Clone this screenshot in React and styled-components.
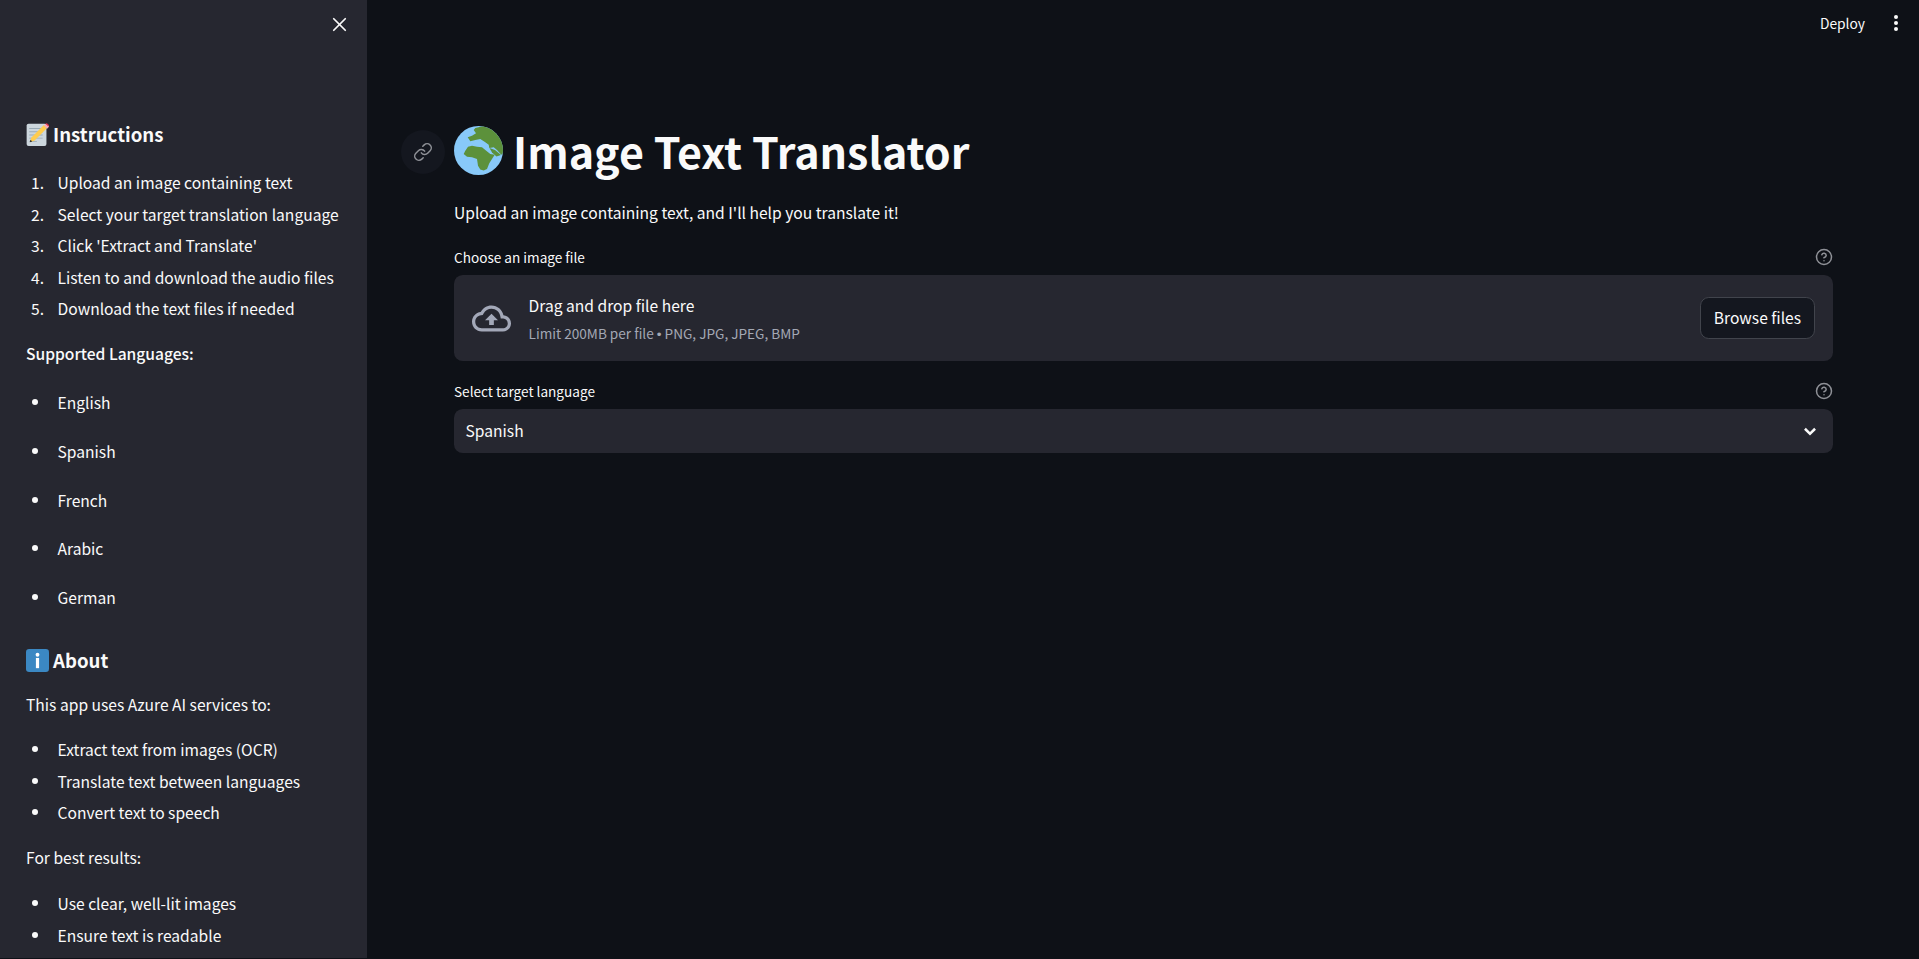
import React from "react";
import styled, { createGlobalStyle } from "styled-components";
import { X, Link, CircleHelp } from "lucide-react";

const Global = createGlobalStyle`
  html, body { margin: 0; padding: 0; height: 100%; background: #0e1117; overflow: hidden; }
  body { font-family: "Noto Sans CJK SC", "Noto Sans", sans-serif; color: #fafafa; -webkit-font-smoothing: antialiased; }
  #root { height: 100%; }
`;

const Shell = styled.div`
  display: flex;
  height: 959px;
  overflow: hidden;
`;

const Sidebar = styled.aside`
  flex: 0 0 367px;
  height: 958px;
  background: #262730;
  padding: 0 0 0 26px;
  box-sizing: border-box;
  overflow: hidden;
`;

const CloseRow = styled.div`
  display: flex;
  justify-content: flex-end;
  align-items: flex-start;
  height: 114px;
  padding: 13px 16px 0 0;
  box-sizing: border-box;
  color: #fafafa;
`;

const SideHeading = styled.h3`
  display: flex;
  align-items: center;
  gap: 4px;
  margin: ${(p) => p.$top || 0}px 0 0;
  height: 40px;
  font-size: 18.6px;
  font-weight: 600;
  line-height: 40px;
`;

const SideText = styled.p`
  margin: ${(p) => p.$top || 0}px 0 0;
  font-size: 15.62px;
  line-height: 28px;
  font-weight: ${(p) => (p.$bold ? 500 : 400)};
  white-space: nowrap;
`;

const List = styled.ul`
  list-style: none;
  margin: ${(p) => p.$top || 0}px 0 0;
  padding: 0;
`;

const Item = styled.li`
  display: flex;
  align-items: center;
  height: 28px;
  margin-bottom: ${(p) => p.$gap ?? 3.5}px;
  font-size: 15.62px;
  line-height: 28px;
  white-space: nowrap;
  &:last-child { margin-bottom: 0; }
`;

const Num = styled.span`
  flex: 0 0 31.5px;
  padding-left: 5px;
  box-sizing: border-box;
`;

const BulletBox = styled.span`
  flex: 0 0 31.5px;
  display: flex;
  padding-left: 6px;
  box-sizing: border-box;
`;

const Dot = styled.i`
  width: 6px;
  height: 6px;
  border-radius: 50%;
  background: #fafafa;
`;

const Main = styled.main`
  flex: 1;
  min-width: 0;
  padding: 0 86px 0 87px;
  box-sizing: border-box;
  background: #0e1117;
`;

const Topbar = styled.header`
  display: flex;
  justify-content: flex-end;
  align-items: center;
  height: 46px;
  margin-right: -86px;
  padding-right: 20px;
  gap: 28px;
`;

const DeployText = styled.span`
  font-size: 13.8px;
  line-height: 22px;
  color: #fafafa;
`;

const Title = styled.h1`
  position: relative;
  display: flex;
  align-items: center;
  gap: 10px;
  margin: 76px 0 0;
  height: 60px;
  font-size: 43px;
  font-weight: 700;
  line-height: 60px;
  white-space: nowrap;
`;

const TitleText = styled.span`
  margin-top: -5px;
`;

const GlobeIcon = styled.svg`
  width: 49px;
  height: 49px;
  flex: none;
  margin-top: -3px;
`;

const Anchor = styled.span`
  position: absolute;
  left: -53px;
  top: 8px;
  width: 44px;
  height: 44px;
  border-radius: 50%;
  background: #14171f;
  display: flex;
  align-items: center;
  justify-content: center;
  color: #8f9197;
`;

const Lead = styled.p`
  margin: 16px 0 0;
  font-size: 15.62px;
  line-height: 28px;
`;

const LabelRow = styled.div`
  display: flex;
  justify-content: space-between;
  align-items: center;
  height: 22px;
  margin-top: ${(p) => p.$top}px;
  color: #fafafa;
  font-size: 13.6px;
  line-height: 20px;
`;

const Help = styled.span`
  display: flex;
  color: #8f9197;
`;

const Dropzone = styled.section`
  display: flex;
  align-items: center;
  height: 86px;
  margin-top: 7px;
  padding: 0 17.6px;
  box-sizing: border-box;
  background: #262730;
  border-radius: 8.8px;
`;

const CloudIcon = styled.svg`
  width: 39px;
  height: 39px;
  color: #a3a8b8;
  flex: none;
`;

const DropText = styled.div`
  display: flex;
  flex-direction: column;
  margin-left: 18px;
  flex: 1;
`;

const DropTitle = styled.span`
  font-size: 15.62px;
  line-height: 28px;
`;

const DropNote = styled.span`
  font-size: 13.6px;
  line-height: 22px;
  margin-top: 3px;
  color: #a3a8b4;
`;

const Sep = styled.span`
  font-family: "Liberation Sans", sans-serif;
`;

const Browse = styled.button`
  width: 115px;
  height: 42px;
  padding: 0 1px 2px 0;
  font-family: inherit;
  font-size: 15.62px;
  color: #fafafa;
  background: #14171f;
  border: 1px solid #41444c;
  border-radius: 8.8px;
`;

const Select = styled.div`
  display: flex;
  align-items: center;
  justify-content: space-between;
  height: 44px;
  margin-top: 7px;
  padding: 0 12px 2px 11.5px;
  box-sizing: border-box;
  background: #262730;
  border-radius: 8.8px;
  font-size: 15.62px;
`;

const ChevronIcon = styled.svg`
  width: 22px;
  height: 22px;
  fill: #fafafa;
  margin-bottom: -2px;
`;

const Memo = () => (
  <svg width="23" height="23" viewBox="0 0 36 36">
    <path fill="#ccd6dd" d="M1 4a3 3 0 0 1 3-3h25a3 3 0 0 1 3 3v29a3 3 0 0 1-3 3H4a3 3 0 0 1-3-3z" />
    <path fill="#99aab5" d="M5 8h21v1.4H5zM5 13h21v1.4H5zM5 18h21v1.4H5zM5 23h21v1.4H5zM5 28h12v1.4H5z" />
    <path fill="#ffcc4d" d="M28 3 8.500 22.500 6 30l7.500-2.500L33 8z" />
    <path fill="#f4abba" d="M31 1l-3 3 5 5 3-3c0-2.500-2.500-5-5-5z" />
    <path fill="#dd2e44" d="M30.500 1.200 35 5.600l1-1.600c-.6-1.600-2.600-3.400-4.200-3.600z" />
    <path fill="#292f33" d="M6 30l1-3.800 2.800 2.800z" />
  </svg>
);

const Info = () => (
  <svg width="23" height="23" viewBox="0 0 36 36">
    <rect x="0" y="0" width="36" height="36" rx="5" fill="#3b88c3" />
    <circle cx="18" cy="9" r="3" fill="#fff" />
    <rect x="15.500" y="14" width="5" height="16" fill="#fff" />
  </svg>
);

const Globe = () => (
  <GlobeIcon viewBox="0 0 49 49">
    <clipPath id="globe-disc"><circle cx="24.500" cy="24.500" r="24.500" /></clipPath>
    <circle cx="24.500" cy="24.500" r="24.500" fill="#88c9f9" />
    <g clipPath="url(#globe-disc)" fill="#5c913b">
      <path d="M21.300 2 29.700 0 39.700 4 46.300 11.300 49.700 19.700 50.300 26.300 47.300 28.700 43 24 39.700 21.300 35.300 22 34.700 18.700 31.300 16.300 26.300 13 21.300 14 16.300 15.300 13.700 11.300 18 9.700 22 7.300 19.700 4z" />
      <path d="M11.300 24.700 14 20.700 18 19.700 23 20.700 28 21.300 31.300 24 36.300 28 40.700 28.700 38 33 35.300 37.300 33 43 29.700 44.500 26.300 43.500 24 39.700 23 33 18 31.300 13 30.700 9.700 28z" />
      <path d="M35.500 22 41 24 47 29 42.500 30.500 38 26.500z" />
    </g>
  </GlobeIcon>
);

const Dots = () => (
  <svg width="6" height="18" viewBox="0 0 6 18" fill="#fafafa">
    <circle cx="3" cy="3" r="2" />
    <circle cx="3" cy="9" r="2" />
    <circle cx="3" cy="15" r="2" />
  </svg>
);

const Chevron = () => (
  <ChevronIcon viewBox="0 0 24 24">
    <path d="M16.590 8.590 12 13.170 7.410 8.590 5.500 10.500l6.500 6.500 6.500-6.500z" />
  </ChevronIcon>
);

const steps = [
  "Upload an image containing text",
  "Select your target translation language",
  "Click 'Extract and Translate'",
  "Listen to and download the audio files",
  "Download the text files if needed",
];
const langs = ["English", "Spanish", "French", "Arabic", "German"];
const uses = ["Extract text from images (OCR)", "Translate text between languages", "Convert text to speech"];
const tips = ["Use clear, well-lit images", "Ensure text is readable"];

const Bullets = ({ items, top, gap }) => (
  <List $top={top}>
    {items.map((t) => (
      <Item key={t} $gap={gap}>
        <BulletBox><Dot /></BulletBox>
        {t}
      </Item>
    ))}
  </List>
);

export default function App() {
  return (
    <>
      <Global />
      <Shell>
        <Sidebar>
          <CloseRow><X size={23} strokeWidth={1.8} /></CloseRow>
          <SideHeading><Memo />Instructions</SideHeading>
          <List as="ol" $top={14}>
            {steps.map((t, i) => (
              <Item key={t}><Num>{i + 1}.</Num>{t}</Item>
            ))}
          </List>
          <SideText $top={17} $bold>Supported Languages:</SideText>
          <Bullets items={langs} top={21} gap={20.75} />
          <SideHeading $top={29}><Info />About</SideHeading>
          <SideText $top={10}>This app uses Azure AI services to:</SideText>
          <Bullets items={uses} top={17} />
          <SideText $top={17}>For best results:</SideText>
          <Bullets items={tips} top={18} />
        </Sidebar>
        <Main>
          <Topbar>
            <DeployText>Deploy</DeployText>
            <Dots />
          </Topbar>
          <Title>
            <Anchor><Link size={20} strokeWidth={1.8} /></Anchor>
            <Globe />
            <TitleText>Image Text Translator</TitleText>
          </Title>
          <Lead>Upload an image containing text, and I'll help you translate it!</Lead>
          <LabelRow $top={20}>
            Choose an image file
            <Help><CircleHelp size={18} strokeWidth={2} /></Help>
          </LabelRow>
          <Dropzone>
            <CloudIcon viewBox="0 0 24 24" fill="currentColor">
              <path d="M19.350 10.040C18.670 6.590 15.640 4 12 4 9.110 4 6.600 5.640 5.350 8.040 2.340 8.360 0 10.910 0 14c0 3.310 2.690 6 6 6h13c2.760 0 5-2.240 5-5 0-2.640-2.050-4.780-4.650-4.960zM19 18H6c-2.210 0-4-1.790-4-4 0-2.050 1.530-3.760 3.560-3.970l1.070-.11.5-.95C8.080 7.140 9.940 6 12 6c2.620 0 4.880 1.860 5.390 4.430l.3 1.500 1.530.11c1.560.1 2.780 1.410 2.780 2.960 0 1.650-1.350 3-3 3zM8 13h2.550v3h2.900v-3H16l-4-4z" />
            </CloudIcon>
            <DropText>
              <DropTitle>Drag and drop file here</DropTitle>
              <DropNote>Limit 200MB per file <Sep>•</Sep> PNG, JPG, JPEG, BMP</DropNote>
            </DropText>
            <Browse>Browse files</Browse>
          </Dropzone>
          <LabelRow $top={19}>
            Select target language
            <Help><CircleHelp size={18} strokeWidth={2} /></Help>
          </LabelRow>
          <Select>
            Spanish
            <Chevron />
          </Select>
        </Main>
      </Shell>
    </>
  );
}
